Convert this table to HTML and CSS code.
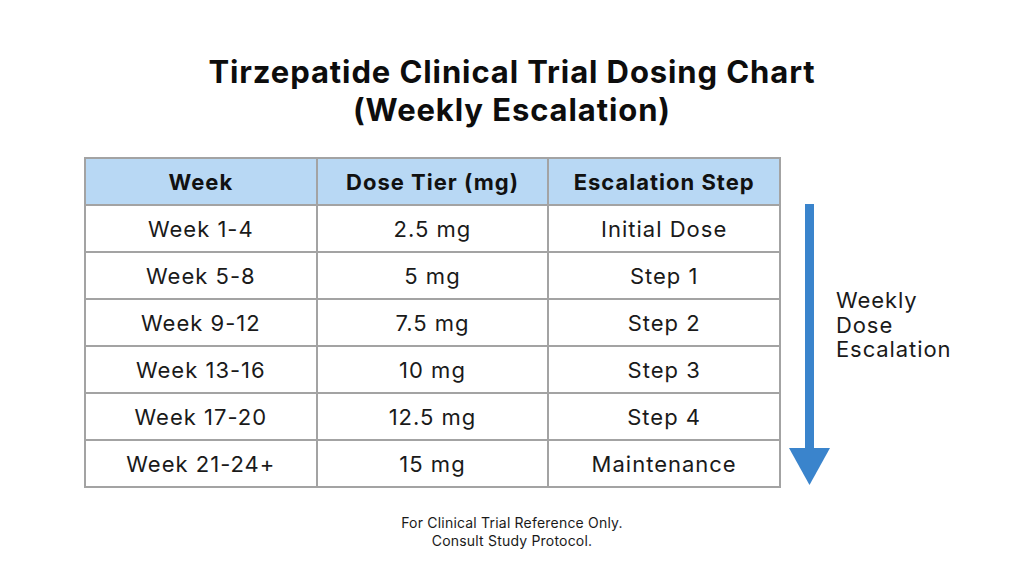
FILE: index.html
```html
<!DOCTYPE html>
<html>
<head>
<meta charset="utf-8">
<link rel="stylesheet" href="styles.css">
</head>
<body>
<div class="page">
  <h1 class="title">Tirzepatide Clinical Trial Dosing Chart<br>(Weekly Escalation)</h1>
  <div class="main">
    <table class="dose">
      <thead>
        <tr><th>Week</th><th>Dose Tier (mg)</th><th>Escalation Step</th></tr>
      </thead>
      <tbody>
        <tr><td>Week 1-4</td><td>2.5 mg</td><td>Initial Dose</td></tr>
        <tr><td>Week 5-8</td><td>5 mg</td><td>Step 1</td></tr>
        <tr><td>Week 9-12</td><td>7.5 mg</td><td>Step 2</td></tr>
        <tr><td>Week 13-16</td><td>10 mg</td><td>Step 3</td></tr>
        <tr><td>Week 17-20</td><td>12.5 mg</td><td>Step 4</td></tr>
        <tr><td>Week 21-24+</td><td>15 mg</td><td>Maintenance</td></tr>
      </tbody>
    </table>
    <svg class="arrow" width="41" height="281" viewBox="0 0 41 281">
      <rect x="16" y="0" width="9" height="246" fill="#3a84cc"/>
      <polygon points="0,244 41,244 20.5,281" fill="#3a84cc"/>
    </svg>
    <div class="label">Weekly<br>Dose<br>Escalation</div>
  </div>
  <p class="note">For Clinical Trial Reference Only.<br>Consult Study Protocol.</p>
</div>
</body>
</html>
```

FILE: styles.css
```css
html, body {
  margin: 0;
  padding: 0;
  background: #ffffff;
}
.page {
  width: 1024px;
  height: 572px;
  font-family: "Inter", "Noto Sans", sans-serif;
  color: #111;
  overflow: hidden;
}
.title {
  margin: 0;
  padding-top: 53px;
  font-size: 31px;
  line-height: 38px;
  font-weight: 700;
  text-align: center;
  letter-spacing: 0.9px;
  color: #0d0d0d;
}
.main {
  display: flex;
  margin-top: 28px;
  padding-left: 84px;
  height: 328px;
}
.dose {
  border-collapse: collapse;
  width: 697px;
  height: 328px;
  table-layout: fixed;
}
.dose th, .dose td {
  border: 2px solid #a3a3a3;
  text-align: center;
  padding: 0;
  font-size: 22px;
  letter-spacing: 1px;
}
.dose th {
  background: #b8d8f4;
  font-weight: 700;
  height: 45px;
}
.dose td {
  font-weight: 400;
  height: 45px;
  color: #1a1a1a;
}
.arrow {
  align-self: flex-end;
  margin-left: 8px;
  flex: none;
}
.label {
  align-self: center;
  margin-left: 6px;
  margin-top: 8px;
  font-size: 22px;
  line-height: 24.5px;
  letter-spacing: 0.9px;
  color: #1a1a1a;
}
.note {
  margin: 29px 0 0;
  text-align: center;
  font-size: 14px;
  line-height: 18px;
  letter-spacing: 0.2px;
  color: #1a1a1a;
}
```
